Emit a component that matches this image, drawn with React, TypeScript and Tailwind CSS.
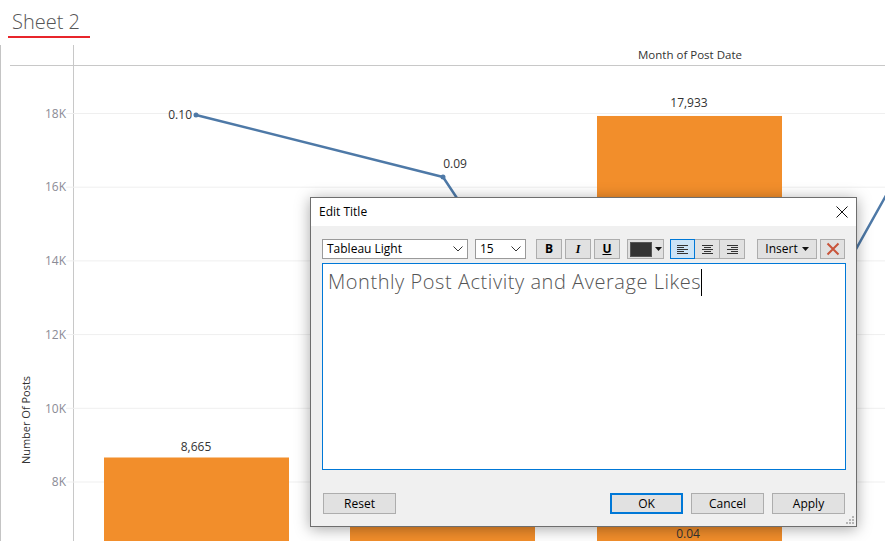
import React from "react";

const yp = (v: number) => 437 - (v - 8000) * 0.03685;

function Chart() {
  const ticks = [18000, 16000, 14000, 12000, 10000, 8000];
  const pts: [number, number][] = [
    [196, 70],
    [443, 132],
    [689, 503],
    [936, 61],
  ];
  const bars = [
    { x: 104, v: 8665 },
    { x: 350, v: 12000 },
    { x: 597, v: 17933 },
  ];
  return (
    <svg width={885} height={496} className="block" style={{ fontFamily: '"Open Sans", sans-serif' }}>
      <line x1={0.5} y1={0} x2={0.5} y2={496} stroke="#c4c4c4" strokeWidth={1} />
      <line x1={73.5} y1={0} x2={73.5} y2={496} stroke="#c8c8c8" strokeWidth={1} />
      <line x1={10} y1={20.5} x2={885} y2={20.5} stroke="#c8c8c8" strokeWidth={1} />
      <text x={690} y={11} textAnchor="middle" dominantBaseline="middle" fontSize={11.5} fill="#333">
        Month of Post Date
      </text>
      {ticks.map((t) => (
        <g key={t}>
          <line x1={66} y1={yp(t)} x2={885} y2={yp(t)} stroke="#efefef" strokeWidth={1} />
          <text x={66} y={yp(t) + 1} textAnchor="end" dominantBaseline="middle" fontSize={12} fill="#8b8b96">
            {t / 1000}K
          </text>
        </g>
      ))}
      <text
        x={0}
        y={0}
        transform="translate(27 375) rotate(-90)"
        textAnchor="middle"
        dominantBaseline="middle"
        fontSize={11}
        fill="#333"
      >
        Number Of Posts
      </text>
      <polyline
        points={pts.map((p) => p.join(",")).join(" ")}
        fill="none"
        stroke="#4e79a7"
        strokeWidth={2.5}
        strokeLinejoin="round"
      />
      {pts.map((p, i) => (
        <circle key={i} cx={p[0]} cy={p[1]} r={2.5} fill="#4e79a7" />
      ))}
      {bars.map((b) => (
        <rect key={b.x} x={b.x} y={yp(b.v)} width={185} height={496 - yp(b.v)} fill="#f28e2b" />
      ))}
      <text x={196} y={403} textAnchor="middle" dominantBaseline="middle" fontSize={12} fill="#333">
        8,665
      </text>
      <text x={689} y={59} textAnchor="middle" dominantBaseline="middle" fontSize={12} fill="#333">
        17,933
      </text>
      <text x={192} y={71} textAnchor="end" dominantBaseline="middle" fontSize={12} fill="#333">
        0.10
      </text>
      <text x={455} y={120} textAnchor="middle" dominantBaseline="middle" fontSize={12} fill="#333">
        0.09
      </text>
      <text x={688} y={490} textAnchor="middle" dominantBaseline="middle" fontSize={12} fill="#333">
        0.04
      </text>
    </svg>
  );
}

function Chevron() {
  return (
    <svg width={10} height={6} viewBox="0 0 10 6">
      <path d="M0.5 0.5 L5 5 L9.5 0.5" fill="none" stroke="#333" strokeWidth={1} />
    </svg>
  );
}

function AlignIcon({ kind }: { kind: "left" | "center" | "right" }) {
  const rows = [11, 7, 11, 7, 11];
  return (
    <svg width={11} height={9} viewBox="0 0 11 9">
      {rows.map((w, i) => {
        const x = kind === "left" ? 0 : kind === "right" ? 11 - w : (11 - w) / 2;
        return <rect key={i} x={x} y={i * 2} width={w} height={1} fill="#333" />;
      })}
    </svg>
  );
}

function Dialog() {
  const btn =
    "flex items-center justify-center h-[20px] bg-[#e1e1e1] border border-[#adadad] text-[12px] text-black";
  return (
    <div className="absolute left-[310px] top-[197px] w-[547px] h-[330px] border border-[#6e6e6e] bg-[#f0f0f0] shadow-[0_2px_14px_rgba(0,0,0,0.35)] flex flex-col">
      <div className="h-[28px] bg-white flex items-center justify-between pl-[8px] pr-[8px]">
        <span className="text-[12px] text-black">Edit Title</span>
        <svg width={12} height={12} viewBox="0 0 12 12">
          <path d="M0.5 0.5 L11.5 11.5 M11.5 0.5 L0.5 11.5" stroke="#111" strokeWidth={1} />
        </svg>
      </div>
      <div className="flex flex-col px-[11px] pt-[13px]">
        <div className="flex items-center h-[20px]">
          <div className="w-[146px] h-[20px] bg-white border border-[#9a9a9a] flex items-center justify-between pl-[4px] pr-[4px] text-[12px] text-black">
            <span>Tableau Light</span>
            <Chevron />
          </div>
          <div className="ml-[7px] w-[51px] h-[20px] bg-white border border-[#9a9a9a] flex items-center justify-between pl-[4px] pr-[4px] text-[12px] text-black">
            <span>15</span>
            <Chevron />
          </div>
          <div className={`${btn} ml-[10px] w-[26px] font-bold text-[#2b3952]`}>B</div>
          <div className={`${btn} ml-[3px] w-[26px] font-bold italic text-[#2b3952]`} style={{ fontFamily: '"Liberation Serif", serif' }}>
            I
          </div>
          <div className={`${btn} ml-[3px] w-[26px] font-bold underline text-[#2b3952]`}>U</div>
          <div className={`${btn} ml-[7px] w-[37px] justify-start pl-[2px] gap-[3px]`}>
            <div className="w-[22px] h-[15px] bg-[#333333] border border-[#555]" />
            <svg width={7} height={4} viewBox="0 0 7 4">
              <path d="M0 0 L7 0 L3.5 4 Z" fill="#111" />
            </svg>
          </div>
          <div className="ml-[6px] flex">
            <div className="w-[25px] h-[20px] bg-[#cce4f7] border border-[#0078d7] flex items-center justify-center">
              <AlignIcon kind="left" />
            </div>
            <div className="w-[25px] h-[20px] bg-[#e1e1e1] border-y border-r border-[#adadad] flex items-center justify-center">
              <AlignIcon kind="center" />
            </div>
            <div className="w-[25px] h-[20px] bg-[#e1e1e1] border-y border-r border-[#adadad] flex items-center justify-center">
              <AlignIcon kind="right" />
            </div>
          </div>
          <div className={`${btn} ml-[12px] w-[60px] gap-[4px]`}>
            <span>Insert</span>
            <svg width={7} height={4} viewBox="0 0 7 4">
              <path d="M0 0 L7 0 L3.5 4 Z" fill="#111" />
            </svg>
          </div>
          <div className={`${btn} ml-[3px] w-[25px]`}>
            <svg width={14} height={14} viewBox="0 0 14 14">
              <path d="M1.5 1.5 L12.5 12.5 M12.5 1.5 L1.5 12.5" stroke="#c9553b" strokeWidth={2} />
            </svg>
          </div>
        </div>
        <div className="mt-[4px] w-[524px] h-[207px] bg-white border border-[#0078d7] pl-[5px] pt-[4px]">
          <div className="flex items-center text-[20px] leading-[28px] tracking-[0.55px] font-light text-[#555]" style={{ fontFamily: '"Open Sans", sans-serif' }}>
            <span>Monthly Post Activity and Average Likes</span>
            <span className="w-[1px] h-[27px] bg-black" />
          </div>
        </div>
        <div className="mt-[23px] flex items-center">
          <div className={`${btn} ml-[1px] w-[73px] h-[21px]`}>Reset</div>
          <div className="flex-1" />
          <div className="w-[73px] h-[21px] bg-[#e1e1e1] border-2 border-[#0078d7] flex items-center justify-center text-[12px] text-black">
            OK
          </div>
          <div className={`${btn} ml-[8px] w-[73px] h-[21px]`}>Cancel</div>
          <div className={`${btn} ml-[8px] w-[73px] h-[21px]`}>Apply</div>
        </div>
      </div>
      <svg className="absolute right-[2px] bottom-[2px]" width={8} height={8} viewBox="0 0 8 8">
        {[
          [6, 0],
          [6, 3],
          [3, 3],
          [6, 6],
          [3, 6],
          [0, 6],
        ].map(([x, y], i) => (
          <rect key={i} x={x} y={y} width={2} height={2} fill="#b5b5b5" />
        ))}
      </svg>
    </div>
  );
}

export default function App() {
  return (
    <div
      className="relative w-[885px] h-[541px] overflow-hidden bg-white"
      style={{ fontFamily: '"Open Sans", sans-serif' }}
    >
      <div className="h-[45px] pt-[8px]">
        <div className="inline-block ml-[8px] pl-[4px] pr-[10px] border-b-2 border-[#e8252b]">
          <span className="block text-[20px] leading-[28px] font-light text-[#555]">Sheet 2</span>
        </div>
      </div>
      <Chart />
      <Dialog />
    </div>
  );
}
